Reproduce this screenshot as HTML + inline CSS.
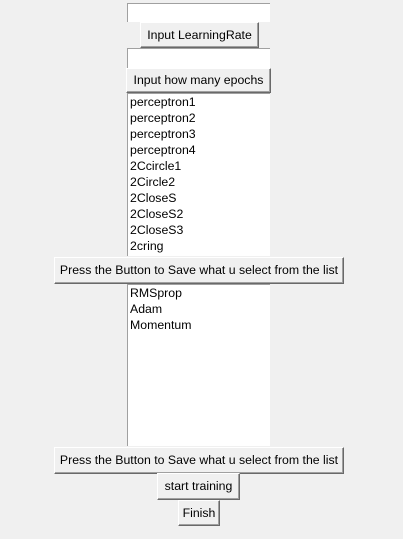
<!DOCTYPE html>
<html><head><style>
body{margin:0;width:403px;height:539px;background:#f0f0f0;position:relative;overflow:hidden;font-family:"Liberation Sans",sans-serif;font-size:12.3px;color:#000}
.e{position:absolute;background:#fff;box-sizing:border-box;border-top:1px solid #a0a0a0;border-left:1px solid #a0a0a0}
.b{position:absolute;box-sizing:border-box;background:#f0f0f0;border:1px solid;border-color:#fff #696969 #696969 #fff;box-shadow:inset -1px -1px 0 #a0a0a0;text-align:center;white-space:nowrap}
.l{position:absolute;background:#fff;box-sizing:border-box;border-top:1px solid #a0a0a0;border-left:1px solid #a0a0a0;padding:0 0 0 2px;line-height:16px}
</style></head><body>
<div class="e" style="left:127px;top:3px;width:143px;height:19px"></div>
<div class="b" style="left:140px;top:22px;width:119px;height:26px;line-height:24px">Input LearningRate</div>
<div class="e" style="left:127px;top:48px;width:143px;height:20px"></div>
<div class="b" style="left:126px;top:68px;width:145px;height:25px;line-height:23px">Input how many epochs</div>
<div class="l" style="left:127px;top:93px;width:143px;height:163px">perceptron1<br>perceptron2<br>perceptron3<br>perceptron4<br>2Ccircle1<br>2Circle2<br>2CloseS<br>2CloseS2<br>2CloseS3<br>2cring</div>
<div class="b" style="left:54px;top:257px;width:290px;height:27px;line-height:25px">Press the Button to Save what u select from the list</div>
<div class="l" style="left:127px;top:284px;width:143px;height:162px">RMSprop<br>Adam<br>Momentum</div>
<div class="b" style="left:54px;top:447px;width:290px;height:27px;line-height:25px">Press the Button to Save what u select from the list</div>
<div class="b" style="left:157px;top:473px;width:83px;height:27px;line-height:25px">start training</div>
<div class="b" style="left:178px;top:500px;width:42px;height:26px;line-height:24px">Finish</div>
</body></html>
